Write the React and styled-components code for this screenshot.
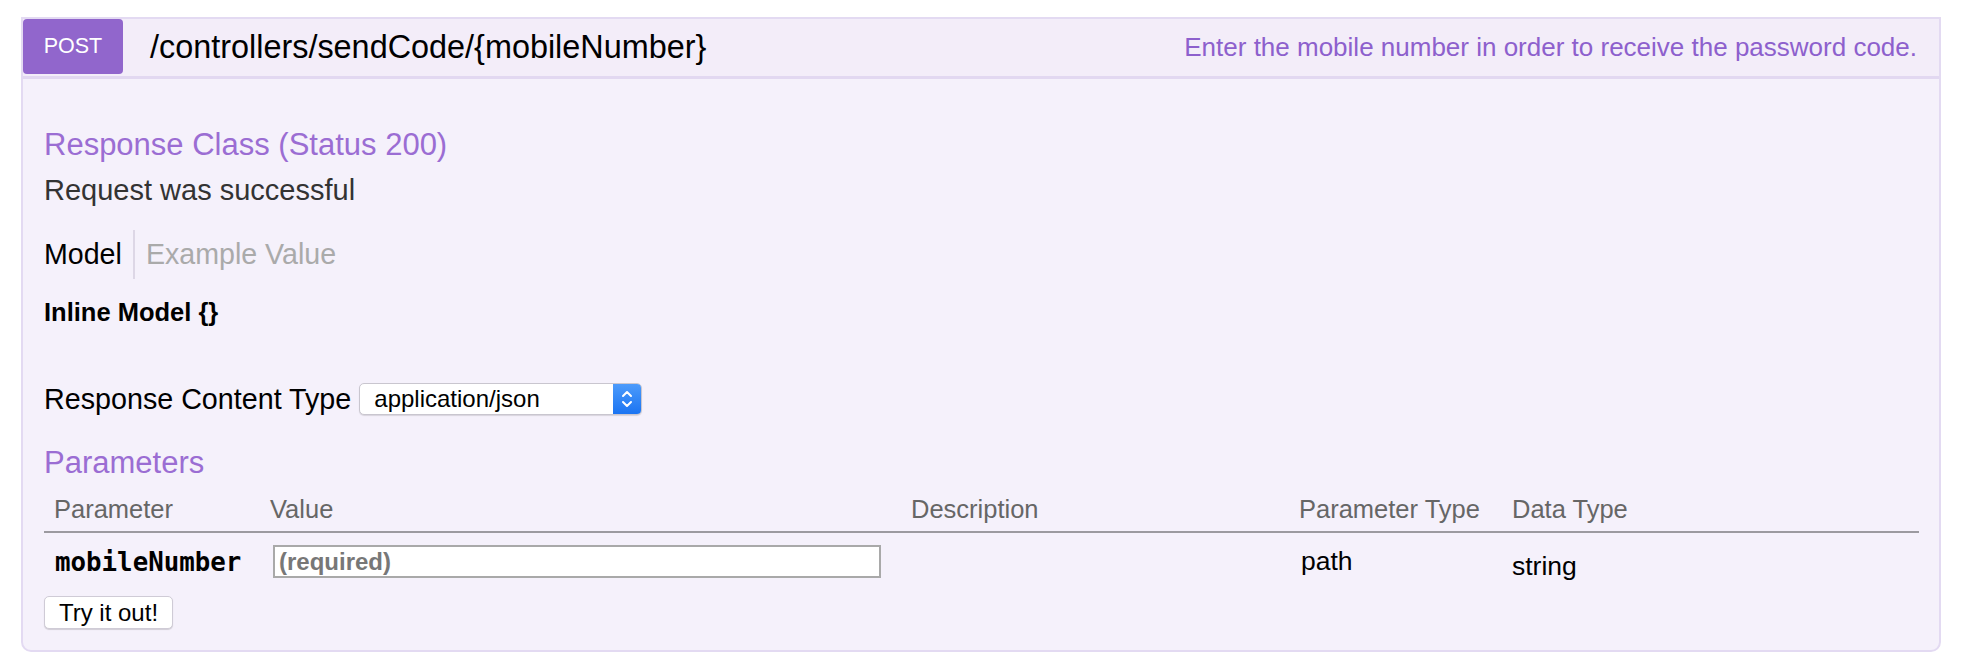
import React from 'react';
import styled, { createGlobalStyle } from 'styled-components';

const GlobalStyle = createGlobalStyle`
  body {
    margin: 0;
    background: #fff;
    font-family: "Liberation Sans", Arial, sans-serif;
    color: #000;
  }
`;

const Page = styled.div`
  padding: 17px 21px;
`;

const Operation = styled.div`
  border: 2px solid #e3daf2;
  border-radius: 0 0 10px 10px;
  background: #f5f1fb;
`;

const Heading = styled.div`
  display: flex;
  align-items: center;
  height: 57px;
  background: #f3edf9;
  border-bottom: 3px solid #e2d8f1;
`;

const Method = styled.span`
  align-self: flex-start;
  display: flex;
  align-items: center;
  justify-content: center;
  width: 100px;
  height: 55px;
  border-radius: 4px;
  background: #9166cc;
  color: #fff;
  font-size: 21.5px;
`;

const Path = styled.span`
  margin-left: 27px;
  font-size: 32.4px;
  color: #000;
`;

const Summary = styled.span`
  flex: 1;
  text-align: right;
  padding-right: 22px;
  font-size: 26px;
  color: #8d60cd;
`;

const Content = styled.div`
  padding: 0 20px 21px 21px;
`;

const SectionTitle = styled.h4`
  margin: ${p => p.$top}px 0 0;
  font-size: 31px;
  line-height: 36px;
  font-weight: normal;
  color: #9b6dd3;
`;

const Note = styled.p`
  margin: 10px 0 0;
  font-size: 29px;
  line-height: 34px;
  color: #333;
`;

const Tabs = styled.div`
  display: flex;
  align-items: center;
  height: 49px;
  margin-top: 23px;
  font-size: 28.6px;
`;

const Tab = styled.span`
  color: ${p => (p.$active ? '#000' : '#aaa')};
  padding: ${p => (p.$active ? '0 11px 0 0' : '0 0 0 11px')};
`;

const TabDivider = styled.span`
  align-self: stretch;
  width: 2px;
  background: #ddd7e6;
`;

const ModelName = styled.div`
  margin-top: 18px;
  font-size: 25.5px;
  line-height: 30px;
  font-weight: bold;
`;

const ContentTypeRow = styled.div`
  display: flex;
  align-items: center;
  height: 36px;
  margin-top: 54px;
  font-size: 28.7px;
`;

const Select = styled.div`
  display: flex;
  align-items: stretch;
  margin-left: 8px;
  width: 283px;
  height: 32px;
  box-sizing: border-box;
  border: 1px solid #c9c6cf;
  border-radius: 5px;
  background: #fff;
  box-shadow: 0 1px 1px rgba(0, 0, 0, 0.12);
  overflow: hidden;
`;

const SelectValue = styled.span`
  flex: 1;
  display: flex;
  align-items: center;
  padding-left: 14px;
  font-size: 24px;
  color: #000;
`;

const SelectArrow = styled.span`
  display: flex;
  align-items: center;
  justify-content: center;
  width: 28px;
  background: linear-gradient(#4c9bfb, #1b74f2);
`;

const ParamGrid = styled.div`
  display: grid;
  grid-template-columns: 216px 641px 388px 213px 1fr;
`;

const HeadCell = styled.div`
  padding: 13px 0 7px 10px;
  font-size: 25.5px;
  line-height: 30px;
  color: #666;
  border-bottom: 2px solid #9c9aa0;
`;

const Cell = styled.div`
  display: flex;
  align-items: center;
  box-sizing: border-box;
  height: 33px;
  padding: ${p => p.$shift || 0}px 0 0 ${p => p.$indent || 11}px;
  margin: 12px 0 8px;
  font-size: 26.5px;
`;

const ParamName = styled.code`
  font-family: "DejaVu Sans Mono", "Liberation Mono", monospace;
  font-weight: bold;
  font-size: 25.8px;
  color: #000;
`;

const ValueInput = styled.div`
  width: 608px;
  height: 33px;
  box-sizing: border-box;
  border: 2px solid #a9a9a9;
  background: #fff;
  display: flex;
  align-items: center;
  padding-left: 4px;
  font-size: 24px;
  font-weight: bold;
  color: #777;
`;

const TryButton = styled.button`
  display: block;
  margin-top: 10px;
  width: 129px;
  height: 33px;
  padding: 0;
  border: 1px solid #cfcbd6;
  border-radius: 5px;
  background: #fff;
  box-shadow: 0 1px 1px rgba(0, 0, 0, 0.15);
  font-family: "Liberation Sans", Arial, sans-serif;
  font-size: 24px;
  color: #000;
`;

const Chevrons = () => (
  <svg width="14" height="22" viewBox="0 0 14 22" fill="none" stroke="#fff" strokeWidth="2" strokeLinecap="round" strokeLinejoin="round">
    <path d="M3 8 L7 4 L11 8" />
    <path d="M3 14 L7 18 L11 14" />
  </svg>
);

const columns = ['Parameter', 'Value', 'Description', 'Parameter Type', 'Data Type'];

const App = () => (
  <Page>
    <GlobalStyle />
    <Operation>
      <Heading>
        <Method>POST</Method>
        <Path>/controllers/sendCode/{'{mobileNumber}'}</Path>
        <Summary>Enter the mobile number in order to receive the password code.</Summary>
      </Heading>
      <Content>
        <SectionTitle $top={48}>Response Class (Status 200)</SectionTitle>
        <Note>Request was successful</Note>
        <Tabs>
          <Tab $active>Model</Tab>
          <TabDivider />
          <Tab>Example Value</Tab>
        </Tabs>
        <ModelName>Inline Model {'{}'}</ModelName>
        <ContentTypeRow>
          Response Content Type
          <Select>
            <SelectValue>application/json</SelectValue>
            <SelectArrow>
              <Chevrons />
            </SelectArrow>
          </Select>
        </ContentTypeRow>
        <SectionTitle $top={28}>Parameters</SectionTitle>
        <ParamGrid>
          {columns.map(col => (
            <HeadCell key={col}>{col}</HeadCell>
          ))}
          <Cell>
            <ParamName>mobileNumber</ParamName>
          </Cell>
          <Cell $indent={13}>
            <ValueInput>(required)</ValueInput>
          </Cell>
          <Cell />
          <Cell $indent={12}>path</Cell>
          <Cell $indent={10} $shift={10}>string</Cell>
        </ParamGrid>
        <TryButton>Try it out!</TryButton>
      </Content>
    </Operation>
  </Page>
);

export default App;
